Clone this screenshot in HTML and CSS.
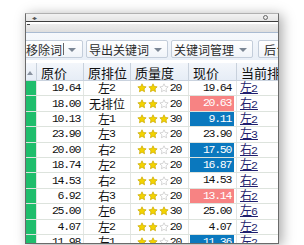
FILE: index.html
```html
<!DOCTYPE html>
<html lang="zh">
<head>
  <meta charset="UTF-8">
  <meta name="viewport" content="width=device-width, initial-scale=1.0">
  <title>关键词排名</title>
  <link rel="stylesheet" href="styles.css">
</head>
<body>

  <svg class="defs" width="0" height="0">
    <symbol id="star" viewBox="0 0 20 20">
      <path d="M10 1.6l2.5 5.3 5.8.8-4.2 4 1 5.8L10 14.7l-5.1 2.8 1-5.8-4.2-4 5.8-.8z"/>
    </symbol>
  </svg>

  <div class="window">
    <div class="titlebar">
      <span class="tb-arrows">◂▸</span>
      <span class="tb-gear"></span>
    </div>
    <div class="menubar"><span class="mark"></span></div>

    <!-- 工具栏 -->
    <div class="toolbar">
      <div class="tbtn first">移除词<i class="sep"></i><span class="arrow"></span></div>
      <div class="tbtn">导出关键词<span class="arrow"></span></div>
      <div class="tbtn">关键词管理<span class="arrow"></span></div>
      <div class="tbtn last">后台管理</div>
    </div>

    <!-- 数据表 -->
    <div class="grid">
      <div class="row head">
        <div class="c c0"><span class="sort"></span></div>
        <div class="c c1">原价</div>
        <div class="c c2">原排位</div>
        <div class="c c3">质量度</div>
        <div class="c c4">现价</div>
        <div class="c c5">当前排位</div>
      </div>

      <div class="row">
        <div class="c c0"></div>
        <div class="c c1 num">19.64</div>
        <div class="c c2">左<b>2</b></div>
        <div class="c c3"><span class="stars"><svg class="star on"><use href="#star"/></svg><svg class="star on"><use href="#star"/></svg><svg class="star"><use href="#star"/></svg></span><span class="num">20</span></div>
        <div class="c c4"><span class="price num">19.64</span></div>
        <div class="c c5"><a href="#">左<b>2</b></a></div>
      </div>

      <div class="row">
        <div class="c c0"></div>
        <div class="c c1 num">18.00</div>
        <div class="c c2">无排位</div>
        <div class="c c3"><span class="stars"><svg class="star on"><use href="#star"/></svg><svg class="star on"><use href="#star"/></svg><svg class="star"><use href="#star"/></svg></span><span class="num">20</span></div>
        <div class="c c4"><span class="price num up">20.63</span></div>
        <div class="c c5"><a href="#">右<b>2</b></a></div>
      </div>

      <div class="row">
        <div class="c c0"></div>
        <div class="c c1 num">10.13</div>
        <div class="c c2">左<b>1</b></div>
        <div class="c c3"><span class="stars"><svg class="star on"><use href="#star"/></svg><svg class="star on"><use href="#star"/></svg><svg class="star on"><use href="#star"/></svg></span><span class="num">30</span></div>
        <div class="c c4"><span class="price num down">9.11</span></div>
        <div class="c c5"><a href="#">左<b>2</b></a></div>
      </div>

      <div class="row">
        <div class="c c0"></div>
        <div class="c c1 num">23.90</div>
        <div class="c c2">左<b>3</b></div>
        <div class="c c3"><span class="stars"><svg class="star on"><use href="#star"/></svg><svg class="star on"><use href="#star"/></svg><svg class="star"><use href="#star"/></svg></span><span class="num">20</span></div>
        <div class="c c4"><span class="price num">23.90</span></div>
        <div class="c c5"><a href="#">左<b>3</b></a></div>
      </div>

      <div class="row">
        <div class="c c0"></div>
        <div class="c c1 num">20.00</div>
        <div class="c c2">右<b>2</b></div>
        <div class="c c3"><span class="stars"><svg class="star on"><use href="#star"/></svg><svg class="star on"><use href="#star"/></svg><svg class="star"><use href="#star"/></svg></span><span class="num">20</span></div>
        <div class="c c4"><span class="price num down">17.50</span></div>
        <div class="c c5"><a href="#">右<b>2</b></a></div>
      </div>

      <div class="row">
        <div class="c c0"></div>
        <div class="c c1 num">18.74</div>
        <div class="c c2">左<b>2</b></div>
        <div class="c c3"><span class="stars"><svg class="star on"><use href="#star"/></svg><svg class="star on"><use href="#star"/></svg><svg class="star"><use href="#star"/></svg></span><span class="num">20</span></div>
        <div class="c c4"><span class="price num down">16.87</span></div>
        <div class="c c5"><a href="#">左<b>2</b></a></div>
      </div>

      <div class="row">
        <div class="c c0"></div>
        <div class="c c1 num">14.53</div>
        <div class="c c2">右<b>2</b></div>
        <div class="c c3"><span class="stars"><svg class="star on"><use href="#star"/></svg><svg class="star on"><use href="#star"/></svg><svg class="star"><use href="#star"/></svg></span><span class="num">20</span></div>
        <div class="c c4"><span class="price num">14.53</span></div>
        <div class="c c5"><a href="#">右<b>2</b></a></div>
      </div>

      <div class="row">
        <div class="c c0"></div>
        <div class="c c1 num">6.92</div>
        <div class="c c2">右<b>3</b></div>
        <div class="c c3"><span class="stars"><svg class="star on"><use href="#star"/></svg><svg class="star on"><use href="#star"/></svg><svg class="star"><use href="#star"/></svg></span><span class="num">20</span></div>
        <div class="c c4"><span class="price num up">13.14</span></div>
        <div class="c c5"><a href="#">右<b>2</b></a></div>
      </div>

      <div class="row">
        <div class="c c0"></div>
        <div class="c c1 num">25.00</div>
        <div class="c c2">左<b>6</b></div>
        <div class="c c3"><span class="stars"><svg class="star on"><use href="#star"/></svg><svg class="star on"><use href="#star"/></svg><svg class="star on"><use href="#star"/></svg></span><span class="num">30</span></div>
        <div class="c c4"><span class="price num">25.00</span></div>
        <div class="c c5"><a href="#">左<b>6</b></a></div>
      </div>

      <div class="row">
        <div class="c c0"></div>
        <div class="c c1 num">4.07</div>
        <div class="c c2">左<b>2</b></div>
        <div class="c c3"><span class="stars"><svg class="star on"><use href="#star"/></svg><svg class="star on"><use href="#star"/></svg><svg class="star"><use href="#star"/></svg></span><span class="num">20</span></div>
        <div class="c c4"><span class="price num">4.07</span></div>
        <div class="c c5"><a href="#">左<b>2</b></a></div>
      </div>

      <div class="row">
        <div class="c c0"></div>
        <div class="c c1 num">11.98</div>
        <div class="c c2">左<b>1</b></div>
        <div class="c c3"><span class="stars"><svg class="star on"><use href="#star"/></svg><svg class="star on"><use href="#star"/></svg><svg class="star"><use href="#star"/></svg></span><span class="num">20</span></div>
        <div class="c c4"><span class="price num down">11.36</span></div>
        <div class="c c5"><a href="#">左<b>2</b></a></div>
      </div>
    </div>
  </div>

</body>
</html>
```

FILE: styles.css
```css
html, body {
  margin: 0;
  height: 100%;
  overflow: hidden;
  background-color: #fff;
}
body {
  padding: 13px 0 0 25px;
  box-sizing: border-box;
  font-family: "Noto Sans CJK SC", sans-serif;
  color: #111;
}
.defs {
  position: absolute;
}

.window {
  width: 254px;
  height: 231px;
  box-sizing: border-box;
  border: 1px solid #6a6a6a;
  border-top-color: #b0b0b0;
  background-color: #fff;
  box-shadow: 3px 2px 12px rgba(0, 0, 0, 0.35);
  overflow: hidden;
}

.titlebar {
  height: 7px;
  background: linear-gradient(#f2f2f2, #e4e4e4);
  display: flex;
  justify-content: space-between;
  align-items: center;
  padding: 0 10px 0 6px;
  border-bottom: 1px solid #3c3c3c;
}
.tb-arrows {
  font-family: "DejaVu Sans", sans-serif;
  font-size: 6px;
  line-height: 6px;
  color: #555;
  letter-spacing: -1px;
}
.tb-gear {
  width: 3px;
  height: 3px;
  border: 1px solid #666;
  border-radius: 50%;
}

.menubar {
  height: 8px;
  background: linear-gradient(#ececec, #dedede);
  border-bottom: 1px solid #a9bbd2;
}
.menubar .mark {
  display: block;
  width: 3px;
  height: 1px;
  margin: 2px 0 0 1px;
  background-color: #444;
}

.toolbar {
  height: 27px;
  box-sizing: border-box;
  padding: 7px 0 0;
  margin-left: -8px;
  background: linear-gradient(#f5f8fc, #e9eff7);
  display: flex;
  gap: 3px;
  white-space: nowrap;
}
.tbtn {
  height: 18px;
  box-sizing: border-box;
  display: flex;
  align-items: center;
  padding: 0 5px 0 2px;
  font-size: 12px;
  color: #2b2b2b;
  border: 1px solid #c3cdda;
  border-radius: 2px;
  background: linear-gradient(#ffffff, #f0f4f9);
}
.tbtn.first {
  padding-left: 7px;
  padding-right: 6px;
}
.tbtn.last {
  margin-left: 2px;
  padding-left: 5px;
}
.tbtn .sep {
  width: 1px;
  height: 12px;
  margin-left: 1px;
  background-color: #666;
}
.tbtn .arrow {
  width: 0;
  height: 0;
  margin-left: 5px;
  margin-top: 2px;
  border-left: 4px solid transparent;
  border-right: 4px solid transparent;
  border-top: 4px solid #7b8694;
}
.tbtn.first .arrow {
  margin-left: 4px;
}

.grid {
  padding-top: 3px;
}
.row {
  display: flex;
  height: 15.4px;
  box-sizing: border-box;
  border-bottom: 1px solid #dde3dd;
  font-size: 12px;
  line-height: 14px;
}
.c {
  box-sizing: border-box;
  border-right: 1px solid #e3e6e3;
  white-space: nowrap;
  display: flex;
  align-items: center;
}
.c0 { width: 11px; background-color: #1fbd6c; }
.c1 { width: 47px; justify-content: flex-end; padding-right: 3px; }
.c2 { width: 47px; justify-content: center; }
.c3 { width: 58px; justify-content: space-between; padding: 0 7px 0 5px; }
.c4 { width: 48px; }
.c5 { flex: 1; border-right: none; padding-left: 3px; overflow: hidden; }

.num {
  font-family: "Liberation Mono", monospace;
  font-size: 11.5px;
  letter-spacing: -1.3px;
}
.c2 b, .c5 b {
  font-family: "Liberation Mono", monospace;
  font-size: 11.5px;
  font-weight: normal;
  margin-left: -1px;
}

.row.head {
  height: 18px;
  border-bottom: 1px solid #c9d2de;
  background: linear-gradient(#f3f6fb, #e6edf6);
  font-size: 13px;
}
.head .c {
  border-right-color: #c8d1dc;
  padding: 3px 0 0 4px;
  justify-content: flex-start;
}
.head .c0 {
  background: none;
  padding: 3px 0 0 1px;
}
.head .sort {
  width: 0;
  height: 0;
  border-left: 3px solid transparent;
  border-right: 3px solid transparent;
  border-bottom: 4px solid #8a93a0;
}

.stars {
  display: flex;
  gap: 1px;
  margin-left: 1px;
}
.star {
  width: 10px;
  height: 10px;
  fill: #fff;
  stroke: #c4c4c4;
  stroke-width: 1.4;
}
.star.on {
  fill: #f3d300;
  stroke: #c9a800;
}

.price {
  flex: 1;
  align-self: stretch;
  margin: 0 2px 0 1px;
  text-align: right;
  padding-right: 3px;
  line-height: 14px;
}
.price.up {
  background-color: #f78383;
  color: #fff;
}
.price.down {
  background-color: #0a78be;
  color: #fff;
}

.c5 a {
  color: #1f1f6e;
  text-decoration: underline;
}
```
